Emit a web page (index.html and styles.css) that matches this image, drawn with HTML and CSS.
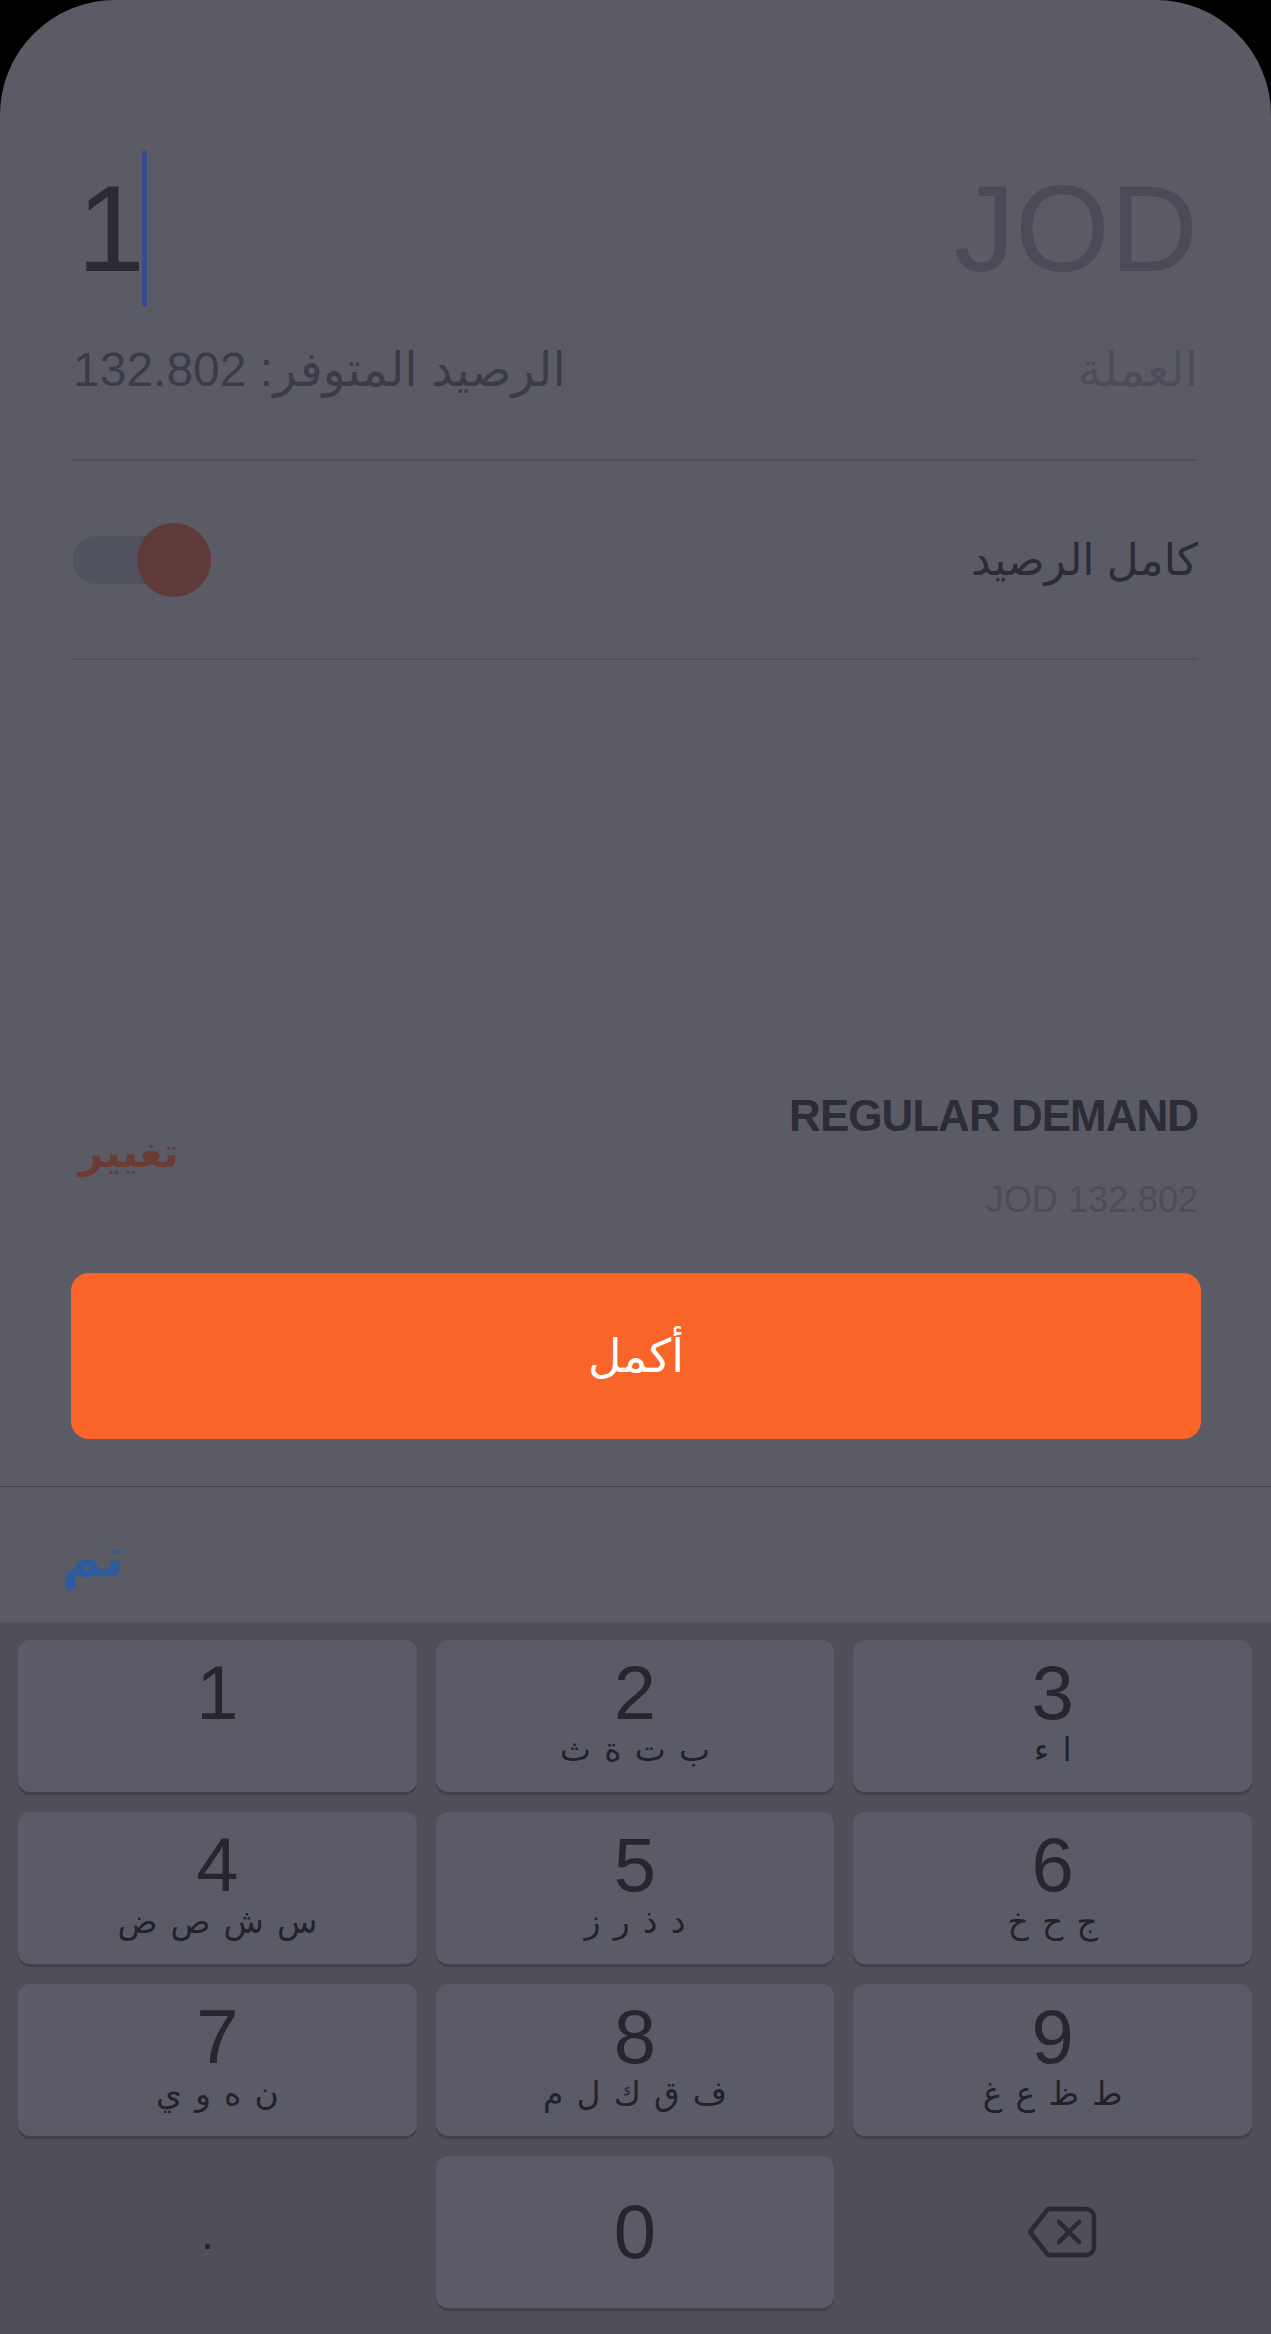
FILE: index.html
```html
<!DOCTYPE html>
<html lang="ar" dir="rtl">
<head>
  <meta charset="UTF-8">
  <meta name="viewport" content="width=device-width, initial-scale=1.0">
  <title>تحويل</title>
  <link rel="stylesheet" href="styles.css">
</head>
<body>

  <div class="screen">

    <!-- Amount Form -->
    <div class="form">
      <div class="amount-row">
        <div class="currency">JOD</div>
        <div class="amount" dir="ltr">
          <span class="amount-value">1</span>
          <span class="caret"></span>
        </div>
      </div>

      <div class="meta-row">
        <span class="meta-label">العملة</span>
        <span class="balance">الرصيد المتوفر: 132.802</span>
      </div>

      <div class="toggle-row">
        <span class="toggle-label">كامل الرصيد</span>
        <span class="switch"></span>
      </div>
    </div>

    <div class="spacer"></div>

    <!-- Selected Account -->
    <div class="plan">
      <div class="plan-info">
        <div class="plan-name">REGULAR DEMAND</div>
        <div class="plan-balance">JOD 132.802</div>
      </div>
      <a class="plan-change">تغيير</a>
    </div>

    <button class="continue">أكمل</button>

    <!-- Keyboard -->
    <div class="toolbar">
      <span class="done">تم</span>
    </div>

    <div class="keypad" dir="ltr">
      <div class="key"><span class="key-digit">1</span><span class="key-letters"></span></div>
      <div class="key"><span class="key-digit">2</span><span class="key-letters" dir="rtl">ب ت ة ث</span></div>
      <div class="key"><span class="key-digit">3</span><span class="key-letters" dir="rtl">ا ء</span></div>
      <div class="key"><span class="key-digit">4</span><span class="key-letters" dir="rtl">س ش ص ض</span></div>
      <div class="key"><span class="key-digit">5</span><span class="key-letters" dir="rtl">د ذ ر ز</span></div>
      <div class="key"><span class="key-digit">6</span><span class="key-letters" dir="rtl">ج ح خ</span></div>
      <div class="key"><span class="key-digit">7</span><span class="key-letters" dir="rtl">ن ه و ي</span></div>
      <div class="key"><span class="key-digit">8</span><span class="key-letters" dir="rtl">ف ق ك ل م</span></div>
      <div class="key"><span class="key-digit">9</span><span class="key-letters" dir="rtl">ط ظ ع غ</span></div>
      <div class="key-plain key-dot">.</div>
      <div class="key key-zero"><span class="key-digit">0</span></div>
      <div class="key-plain key-back">
        <svg width="70" height="52" viewBox="0 0 70 52">
          <path d="M21 3 H59 A8 8 0 0 1 67 11 V41 A8 8 0 0 1 59 49 H21 L3 26 Z" fill="none" stroke="#2a2a35" stroke-width="4.5" stroke-linejoin="round"/>
          <path d="M32 16 L52 36 M52 16 L32 36" stroke="#2a2a35" stroke-width="4.5" stroke-linecap="round"/>
        </svg>
      </div>
    </div>

  </div>

</body>
</html>
```

FILE: styles.css
```css
/* Basic Styling */
* {
  box-sizing: border-box;
  font-family: "Liberation Sans", "DejaVu Sans", sans-serif;
}
body {
  margin: 0;
  background-color: #000;
}

/* Screen */
.screen {
  width: 1271px;
  height: 2334px;
  display: flex;
  flex-direction: column;
  background-color: #5b5b66;
  border-radius: 115px 115px 0 0;
  overflow: hidden;
}
.spacer {
  flex: 1;
}

/* Amount Form */
.form {
  padding: 0 73px;
}
.amount-row {
  margin-top: 150px;
  height: 157px;
  display: flex;
  justify-content: space-between;
  align-items: center;
}
.currency {
  font-size: 122px;
  line-height: 1;
  color: #4b4b57;
}
.amount {
  display: flex;
  align-items: center;
  padding-left: 4px;
}
.amount-value {
  font-size: 122px;
  line-height: 1;
  color: #2b2b36;
}
.caret {
  width: 5px;
  height: 157px;
  margin-left: -3px;
  border-radius: 3px;
  background-color: #3b4a8c;
}
.meta-row {
  margin-top: 33px;
  padding-bottom: 59px;
  display: flex;
  justify-content: space-between;
  align-items: baseline;
  font-size: 48px;
  line-height: 60px;
  border-bottom: 2px solid #51515c;
}
.meta-label {
  color: #4d4d59;
}
.balance {
  color: #3c3c48;
}
.toggle-row {
  height: 199px;
  display: flex;
  justify-content: space-between;
  align-items: center;
  border-bottom: 2px solid #51515c;
}
.toggle-label {
  font-size: 44px;
  color: #2c2c37;
}
.switch {
  position: relative;
  width: 122px;
  height: 48px;
  border-radius: 24px;
  background-color: #50525d;
}
.switch::after {
  content: "";
  position: absolute;
  right: -16px;
  top: -13px;
  width: 74px;
  height: 74px;
  border-radius: 50%;
  background-color: #5f3a39;
}

/* Selected Account */
.plan {
  margin: 0 73px 51px;
  display: flex;
  justify-content: space-between;
  align-items: center;
}
.plan-name {
  font-size: 44px;
  line-height: 50px;
  font-weight: bold;
  letter-spacing: -1px;
  color: #2d2d38;
}
.plan-balance {
  margin-top: 37px;
  font-size: 36px;
  line-height: 44px;
  color: #4d4d59;
}
.plan-change {
  font-size: 42px;
  font-weight: bold;
  color: #6b3b36;
  margin-left: 6px;
  margin-top: -8px;
}

/* Continue Button */
.continue {
  margin: 0 70px 47px 71px;
  height: 166px;
  border: none;
  border-radius: 18px;
  background-color: #f96429;
  color: #fff;
  font-size: 46px;
}

/* Keyboard */
.toolbar {
  height: 136px;
  padding: 6px 62px 0;
  display: flex;
  justify-content: flex-end;
  align-items: center;
  border-top: 1px solid #474752;
}
.done {
  font-size: 54px;
  font-weight: bold;
  color: #2e5b9d;
}
.keypad {
  height: 712px;
  padding: 18px 19px 26px 18px;
  display: grid;
  grid-template-columns: repeat(3, 1fr);
  grid-auto-rows: 152px;
  gap: 20px 19px;
  background-color: #4f4f5a;
}
.key {
  padding-top: 15px;
  display: flex;
  flex-direction: column;
  align-items: center;
  border-radius: 12px;
  background-color: #5b5b67;
  box-shadow: 0 3px 0 #40404b;
}
.key-digit {
  font-size: 76px;
  line-height: 76px;
  color: #26262f;
}
.key-letters {
  height: 38px;
  font-size: 33px;
  line-height: 38px;
  word-spacing: 4px;
  color: #22222b;
}
.key-zero {
  padding-top: 0;
  justify-content: center;
}
.key-plain {
  display: flex;
  justify-content: center;
  align-items: center;
}
.key-dot {
  padding-right: 20px;
  font-size: 48px;
  color: #26262f;
}
.key-back {
  padding-left: 18px;
}
```
